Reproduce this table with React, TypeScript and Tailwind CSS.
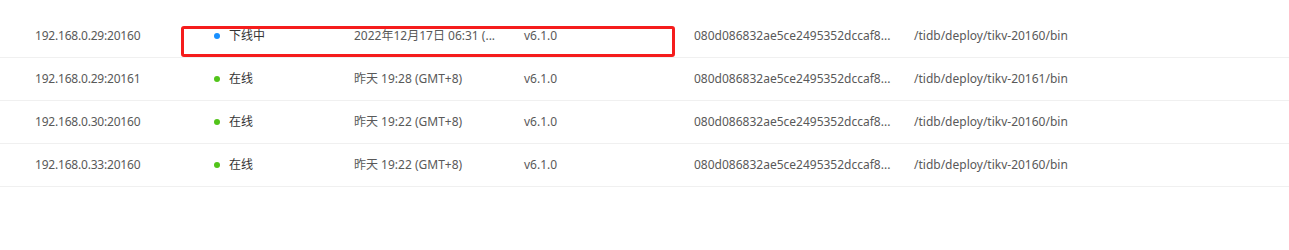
const rows = [
  { addr: "192.168.0.29:20160", status: "下线中", dot: "bg-[#1890ff]", time: "2022年12月17日 06:31 (...", path: "/tidb/deploy/tikv-20160/bin" },
  { addr: "192.168.0.29:20161", status: "在线", dot: "bg-[#52c41a]", time: "昨天 19:28 (GMT+8)", path: "/tidb/deploy/tikv-20161/bin" },
  { addr: "192.168.0.30:20160", status: "在线", dot: "bg-[#52c41a]", time: "昨天 19:22 (GMT+8)", path: "/tidb/deploy/tikv-20160/bin" },
  { addr: "192.168.0.33:20160", status: "在线", dot: "bg-[#52c41a]", time: "昨天 19:22 (GMT+8)", path: "/tidb/deploy/tikv-20160/bin" },
]

export default function App() {
  return (
    <div
      className="relative w-[1289px] h-[250px] bg-white text-[12px] text-[#595959] pt-[15px]"
      style={{ fontFamily: '"Noto Sans", "Noto Sans CJK SC", sans-serif' }}
    >
      {rows.map((r) => (
        <div key={r.addr} className="flex items-center h-[43px] border-b border-[#f0f0f0]">
          <div className="w-[214px] pl-[35px] tracking-[-0.2px]">{r.addr}</div>
          <div className="w-[140px] flex items-center">
            <span className={`w-[6px] h-[6px] rounded-full ${r.dot}`} />
            <span className="ml-[9px] text-[#333]">{r.status}</span>
          </div>
          <div className="w-[170px] whitespace-nowrap">{r.time}</div>
          <div className="w-[170px]">v6.1.0</div>
          <div className="w-[220px] whitespace-nowrap">080d086832ae5ce2495352dccaf8...</div>
          <div className="flex-1">{r.path}</div>
        </div>
      ))}
      {/* annotation box */}
      <div className="absolute left-[181px] top-[26px] w-[494px] h-[31px] border-[3px] border-[#f51c1c] rounded-[3px]" />
    </div>
  )
}
